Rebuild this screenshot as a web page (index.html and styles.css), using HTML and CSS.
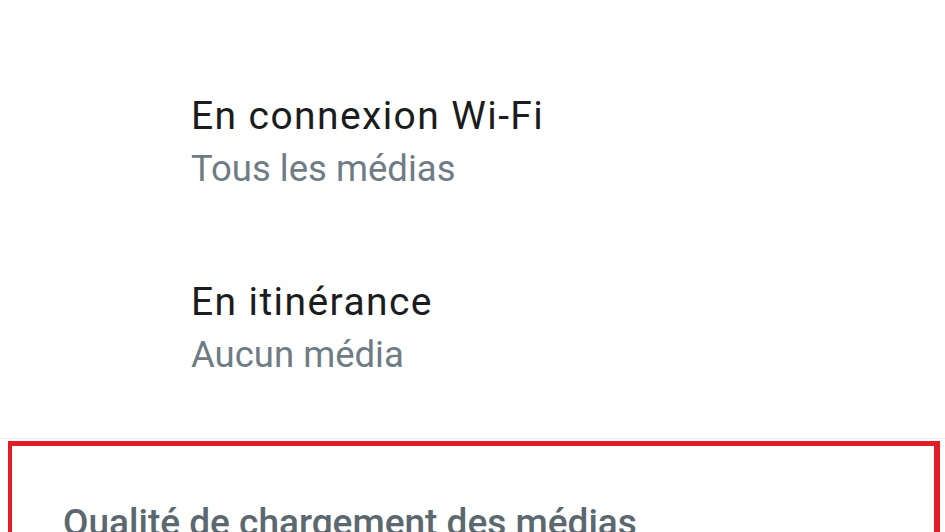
FILE: index.html
```html
<!DOCTYPE html>
<html lang="fr">
<head>
    <meta charset="UTF-8">
    <title>Stockage et données</title>
    <link rel="stylesheet" href="styles.css">
</head>
<body>
    <div class="settings">
        <div class="item">
            <div class="title">En connexion Wi-Fi</div>
            <div class="subtitle">Tous les médias</div>
        </div>
        <div class="item">
            <div class="title">En itinérance</div>
            <div class="subtitle">Aucun média</div>
        </div>
        <div class="divider"></div>
        <div class="highlight">
            <div class="section-title">Qualité de chargement des médias</div>
        </div>
    </div>
</body>
</html>
```

FILE: styles.css
```css
html, body {
    height: 532px;
    overflow: hidden;
}
body {
    margin: 0;
    background-color: #ffffff;
    font-family: Roboto, "Noto Sans", sans-serif;
}
.settings {
    display: flex;
    flex-direction: column;
}
.item {
    padding: 90px 0 0 191px;
}
.item + .item {
    padding-top: 81px;
}
.title {
    font-size: 39px;
    line-height: 52px;
    letter-spacing: 1.4px;
    color: #1b1c1e;
}
.subtitle {
    font-size: 36.5px;
    line-height: 52px;
    margin-top: 1px;
    color: #6f7c85;
}
.divider {
    height: 1px;
    background-color: #ebebeb;
    margin-top: 57px;
}
.highlight {
    margin: 2px 5px 0 8px;
    border: 5px solid #e21d26;
    border-left-width: 4px;
    border-right-width: 6px;
    height: 140px;
    padding: 51px 0 0 51px;
}
.section-title {
    font-size: 37px;
    line-height: 52px;
    font-weight: 500;
    color: #5c6870;
}
```
